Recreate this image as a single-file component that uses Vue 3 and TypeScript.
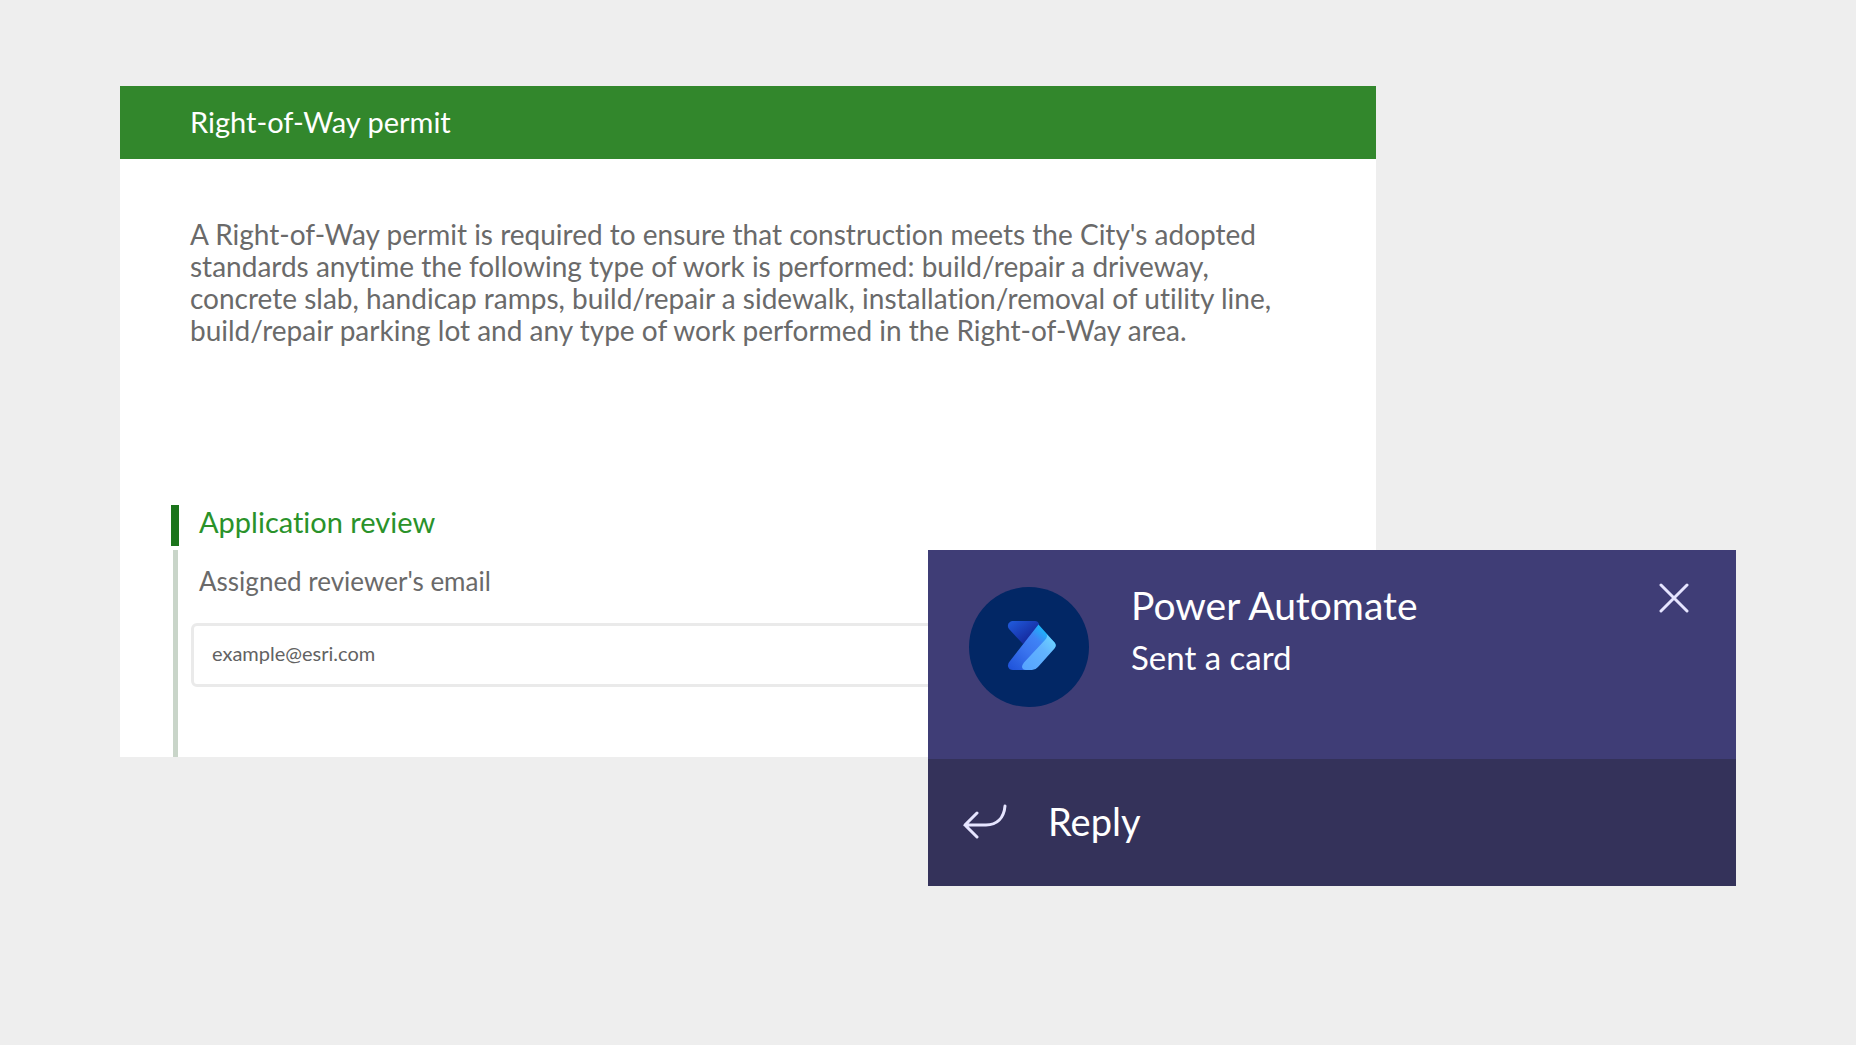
<script setup lang="ts">
import { ref } from 'vue'

const email = ref('')
const notificationOpen = ref(true)

const descriptionLines: string[] = [
  "A Right-of-Way permit is required to ensure that construction meets the City's adopted",
  'standards anytime the following type of work is performed: build/repair a driveway,',
  'concrete slab, handicap ramps, build/repair a sidewalk, installation/removal of utility line,',
  'build/repair parking lot and any type of work performed in the Right-of-Way area.',
]
</script>

<template>
  <main class="page">
    <div class="stage">
      <form class="permit" @submit.prevent>
        <header class="permit-header">
          <h1>Right-of-Way permit</h1>
        </header>
        <p class="description">
          <span v-for="line in descriptionLines" :key="line">{{ line }} </span>
        </p>
        <section class="review">
          <div class="rail" aria-hidden="true">
            <span class="rail-active"></span>
            <span class="rail-rest"></span>
          </div>
          <div class="review-body">
            <h2>Application review</h2>
            <label for="reviewer-email">Assigned reviewer's email</label>
            <input id="reviewer-email" v-model="email" type="email" placeholder="example@esri.com" />
          </div>
        </section>
      </form>

      <aside v-if="notificationOpen" class="toast">
        <div class="toast-top">
          <svg class="avatar" viewBox="0 0 120 120" aria-hidden="true">
            <defs>
              <linearGradient id="fold" x1="0" y1="0" x2="1" y2="1">
                <stop offset="0.1" stop-color="#1f56d6" />
                <stop offset="0.8" stop-color="#14269a" />
              </linearGradient>
              <linearGradient id="band" x1="1" y1="0" x2="0" y2="1">
                <stop offset="0.15" stop-color="#18bdfa" />
                <stop offset="0.36" stop-color="#3f83f6" />
                <stop offset="0.6" stop-color="#3a74ee" />
                <stop offset="1" stop-color="#1d50d8" />
              </linearGradient>
              <linearGradient id="edge" x1="1" y1="0" x2="0" y2="1">
                <stop offset="0" stop-color="#6fdcff" />
                <stop offset="0.4" stop-color="#62b4ff" />
                <stop offset="1" stop-color="#55a2ff" />
              </linearGradient>
            </defs>
            <circle cx="60" cy="60" r="60" fill="#022765" />
            <path d="M43 34H66Q69 34 70 37V42L54 57L40 42Q38 39.500 39.500 36.500Q41 34 43 34Z" fill="url(#fold)" />
            <path d="M69.500 37.500L86 56Q87 58 86 60L60 83H44Q40 83 39 79.500Q38.500 76.500 41 74Z" fill="url(#band)" />
            <path d="M77.500 47L85.500 55.500Q88 58.500 85.500 61.500L69 80Q66.500 83 63 83H57Q53.500 83 53 80Q53 78 55 75.500L76 53Q79 50 77.500 47Z" fill="url(#edge)" />
          </svg>
          <div class="message">
            <strong>Power Automate</strong>
            <span>Sent a card</span>
          </div>
          <button class="close" type="button" aria-label="Close" @click="notificationOpen = false">
            <svg viewBox="0 0 30 30" aria-hidden="true">
              <path d="M2 2L28 28M28 2L2 28" />
            </svg>
          </button>
        </div>
        <button class="reply" type="button">
          <svg viewBox="0 0 46 36" aria-hidden="true">
            <path d="M43 3C42 15 35 22 24 22H3M15 10L3 22L15 34" />
          </svg>
          <span>Reply</span>
        </button>
      </aside>
    </div>
  </main>
</template>

<style>
body {
  margin: 0;
  background: #eeeeee;
}
</style>

<style scoped>
.page {
  box-sizing: border-box;
  min-height: 100vh;
  padding: 86px 120px 86px 120px;
  background: #eeeeee;
  font-family: Lato, sans-serif;
  font-variant-ligatures: none;
}

.stage {
  position: relative;
}

.permit {
  width: 77.7%;
  background: #ffffff;
  color: #6a6a6a;
}

.permit-header {
  display: flex;
  align-items: center;
  box-sizing: border-box;
  height: 73px;
  padding: 0 70px 2px;
  background: #32872c;
  color: #ffffff;
}

h1,
h2 {
  margin: 0;
  font-size: 29px;
  font-weight: 400;
  line-height: 32px;
}

.description {
  margin: 0;
  padding: 59px 70px 0;
  font-size: 28px;
  line-height: 32px;
}

.description span {
  display: block;
  white-space: nowrap;
}

.review {
  display: flex;
  gap: 12px;
  padding: 159px 70px 0 51px;
}

.rail {
  display: flex;
  flex-direction: column;
  align-items: center;
  gap: 4px;
  width: 8px;
}

.rail-active {
  width: 8px;
  height: 41px;
  background: #1b741b;
}

.rail-rest {
  flex: 1;
  width: 5px;
  background: #c9d5c9;
}

.review-body {
  display: flex;
  flex: 1;
  flex-direction: column;
  padding-bottom: 70px;
}

h2 {
  padding: 1px 8px 0;
  color: #2a922a;
}

label {
  padding: 27px 8px 0;
  font-size: 26px;
  line-height: 32px;
}

input {
  box-sizing: border-box;
  width: 100%;
  height: 64px;
  margin-top: 26px;
  padding: 0 18px 4px;
  border: 3px solid #eaeaea;
  border-radius: 6px;
  background: #ffffff;
  font-family: inherit;
  font-size: 20px;
}

input::placeholder {
  color: #626262;
  opacity: 1;
}

.toast {
  position: absolute;
  top: 464px;
  right: 0;
  width: 50%;
  color: #ffffff;
}

.toast-top {
  display: flex;
  box-sizing: border-box;
  height: 209px;
  padding: 37px 47px 0 41px;
  background: #3f3d76;
}

.avatar {
  flex: none;
  width: 120px;
  height: 120px;
}

.message {
  display: flex;
  flex: 1;
  flex-direction: column;
  gap: 12px;
  margin-top: -2px;
  padding-left: 42px;
}

.message strong {
  font-size: 39px;
  font-weight: 400;
  line-height: 40px;
}

.message span {
  font-size: 33px;
  line-height: 40px;
}

button {
  border: 0;
  background: none;
  color: inherit;
  font-family: inherit;
  font-variant-ligatures: none;
  cursor: pointer;
}

button svg {
  fill: none;
  stroke: #e6e5ff;
  stroke-width: 3;
  stroke-linecap: round;
}

.close {
  align-self: flex-start;
  padding: 0;
}

.close svg {
  display: block;
  width: 30px;
  height: 30px;
  margin-top: -4px;
}

.reply {
  display: flex;
  align-items: center;
  gap: 40px;
  width: 100%;
  height: 127px;
  padding: 0 34px 4px;
  background: #34325a;
  font-size: 38px;
  line-height: 40px;
}

.reply svg {
  width: 46px;
  height: 36px;
}
</style>
